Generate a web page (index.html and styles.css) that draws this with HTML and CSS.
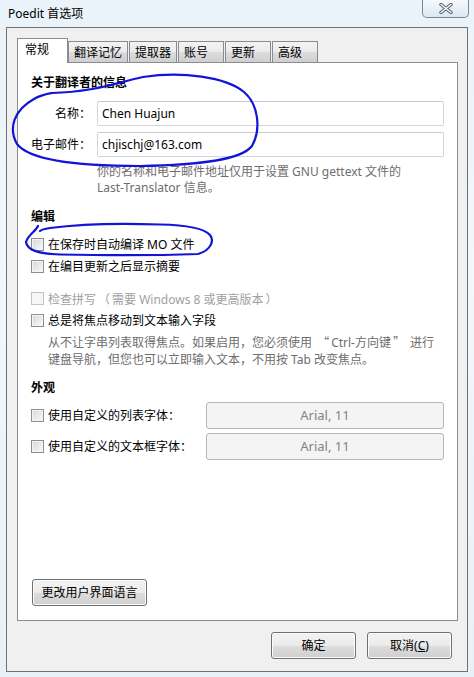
FILE: index.html
```html
<!DOCTYPE html>
<html lang="zh-CN">
<head>
<meta charset="utf-8">
<title>Poedit 首选项</title>
<link rel="stylesheet" href="styles.css">
</head>
<body>
<div class="window">
  <div class="titlebar">
    <span class="title">Poedit 首选项</span>
    <div class="close">
      <svg width="16" height="11" viewBox="0 0 16 11"><path d="M3 1.5 L13 9.5 M13 1.5 L3 9.5" stroke="#4f5f70" stroke-width="3.4" stroke-linecap="round"/><path d="M3 1.5 L13 9.5 M13 1.5 L3 9.5" stroke="#f4f7fa" stroke-width="1.6" stroke-linecap="round"/></svg>
    </div>
  </div>
  <div class="client">
    <div class="notebook">
      <div class="tabs">
        <div class="tab active">常规</div>
        <div class="tab">翻译记忆</div>
        <div class="tab">提取器</div>
        <div class="tab">账号</div>
        <div class="tab">更新</div>
        <div class="tab">高级</div>
      </div>
      <div class="panel">
        <div class="heading h-first">关于翻译者的信息</div>
        <div class="form">
          <label class="flabel">名称：</label>
          <div class="input">Chen Huajun</div>
          <label class="flabel">电子邮件：</label>
          <div class="input">chjischj@163.com</div>
          <div class="help help-form">你的名称和电子邮件地址仅用于设置 GNU gettext 文件的<br>Last-Translator 信息。</div>
        </div>

        <div class="heading h-edit">编辑</div>
        <div class="check c1"><span class="box"></span><span>在保存时自动编译 MO 文件</span></div>
        <div class="check c2"><span class="box"></span><span>在编目更新之后显示摘要</span></div>
        <div class="check c3 disabled"><span class="box"></span><span>检查拼写<span class="punct">（</span>需要 Windows 8 或更高版本<span class="punct">）</span></span></div>
        <div class="check c4"><span class="box"></span><span>总是将焦点移动到文本输入字段</span></div>
        <div class="help help-check">从不让字串列表取得焦点。如果启用，您必须使用 <span class="punct">“</span>Ctrl-方向键<span class="punct">”</span> 进行<br>键盘导航，但您也可以立即输入文本，不用按 Tab 改变焦点。</div>

        <div class="heading h-look">外观</div>
        <div class="fonts">
          <div class="check"><span class="box"></span><span>使用自定义的列表字体：</span></div>
          <div class="fontbtn">Arial, 11</div>
          <div class="check"><span class="box"></span><span>使用自定义的文本框字体：</span></div>
          <div class="fontbtn">Arial, 11</div>
        </div>

        <div class="button langbtn">更改用户界面语言</div>
      </div>
    </div>
    <div class="actions">
      <div class="button dlgbtn">确定</div>
      <div class="button dlgbtn">取消(<u>C</u>)</div>
    </div>
  </div>
  <svg class="scribble" width="474" height="677" viewBox="0 0 474 677">
    <path d="M52,93 C92,92 112,84 143,77 C182,71 226,77 244,92 C259,105 261,130 252,146 C241,160 200,165 140,166 C80,166 30,161 17,144 C8,128 14,110 34,99 C41,95 47,94 52,93" fill="none" stroke="#1414d8" stroke-width="2.2" stroke-linecap="round"/>
    <path d="M38,226 C36,231 28,235 26,242 C27,250 40,254 60,254.5 C110,255.5 170,255 198,254 C212,250 214,240 210,235 C204,228 185,225 160,224.5 C120,223 80,224 50,228 C44,229 41,230 40,231" fill="none" stroke="#1414d8" stroke-width="2.2" stroke-linecap="round"/>
  </svg>
</div>
</body>
</html>
```

FILE: styles.css
```css
* { box-sizing: border-box; }
html, body {
  margin: 0;
  padding: 0;
}
body {
  width: 474px;
  height: 677px;
  overflow: hidden;
  font-family: "Noto Sans", "Noto Sans CJK SC", sans-serif;
  font-size: 12px;
  color: #000;
  text-spacing-trim: space-all;
}
.window {
  position: relative;
  width: 474px;
  height: 677px;
  background: linear-gradient(180deg, #eaf3f9 0%, #f2f7fb 40%, #e8f1f8 100%);
  display: flex;
  flex-direction: column;
}
.titlebar {
  height: 27px;
  display: flex;
  justify-content: space-between;
  align-items: flex-start;
}
.title {
  margin: 5px 0 0 8px;
  font-size: 12px;
  line-height: 17px;
  color: #000;
}
.close {
  width: 47px;
  height: 18px;
  margin-right: 5px;
  border: 1px solid #7a8896;
  border-top: none;
  border-radius: 0 0 5px 5px;
  background: linear-gradient(180deg, #f6f9fc 0%, #e9f0f6 50%, #dde7f0 100%);
  display: flex;
  align-items: center;
  justify-content: center;
}
.client {
  margin: 0 6px 0 6px;
  height: 645px;
  border: 1px solid #6f7274;
  background: #f0f0f0;
  padding: 10px 9px 12px 10px;
  display: flex;
  flex-direction: column;
}
.notebook {
  display: flex;
  flex-direction: column;
}
.tabs {
  height: 24px;
  display: flex;
  align-items: flex-end;
  position: relative;
  z-index: 2;
}
.tab {
  height: 21px;
  min-width: 46px;
  padding: 0 5px;
  border: 1px solid #898c95;
  border-bottom: none;
  margin-right: 1px;
  background: linear-gradient(180deg, #f3f3f3 0%, #ebebeb 50%, #dddddd 51%, #cfcfcf 100%);
  line-height: 21px;
  white-space: nowrap;
}
.tab.active {
  height: 25px;
  margin-bottom: -1px;
  width: 51px;
  padding: 0 0 0 7px;
  margin-right: 0;
  background: #fff;
  line-height: 21px;
}
.panel {
  height: 559px;
  border: 1px solid #898c95;
  background: #fff;
  padding: 11px 13px 14px 13px;
  display: flex;
  flex-direction: column;
  position: relative;
  z-index: 1;
}
.heading {
  font-weight: bold;
  line-height: 17px;
}
.form {
  margin-top: 10px;
  display: grid;
  grid-template-columns: 60px 1fr;
  column-gap: 6px;
  row-gap: 6px;
}
.flabel {
  text-align: right;
  align-self: center;
  line-height: 17px;
  white-space: nowrap;
}
.input {
  height: 25px;
  border: 1px solid #d4d6da;
  border-top-color: #c6c9ce;
  border-radius: 2px;
  padding: 0 4px;
  line-height: 23px;
  background: #fff;
}
.help {
  color: #6d6d6d;
}
.help-form {
  grid-column: 2;
  margin-top: 1px;
  line-height: 16px;
}
.punct {
  font-family: "Noto Sans CJK SC", sans-serif;
  display: inline-block;
  width: 12px;
  margin: 0 2px;
  text-align: center;
}
.h-edit { margin-top: 12px; }
.check {
  display: flex;
  align-items: center;
  height: 17px;
  line-height: 17px;
  white-space: nowrap;
}
.box {
  width: 13px;
  height: 13px;
  margin-right: 4px;
  flex: none;
  border: 1px solid #8e8f8f;
  background: linear-gradient(135deg, #d6d6d6 0%, #ececec 60%, #fbfbfb 100%);
  box-shadow: inset 0 0 0 1px #f4f4f4;
}
.c1 { margin-top: 11px; }
.c2 { margin-top: 5px; }
.c3 { margin-top: 15px; }
.c4 { margin-top: 5px; }
.disabled { color: #a0a0a0; }
.disabled .box {
  border-color: #c4c4c4;
  background: #f6f6f6;
  box-shadow: none;
}
.help-check {
  margin-top: 4px;
  padding-left: 17px;
  line-height: 17px;
}
.h-look { margin-top: 11px; }
.fonts {
  margin-top: 6px;
  display: grid;
  grid-template-columns: 175px 1fr;
  row-gap: 4px;
  align-items: center;
}
.fontbtn {
  height: 27px;
  border: 1px solid #b4b8bb;
  border-radius: 3px;
  background: #f4f4f4;
  color: #838383;
  text-align: center;
  font-size: 13px;
  line-height: 25px;
}
.button {
  height: 27px;
  border: 1px solid #707070;
  border-radius: 3px;
  background: linear-gradient(180deg, #f2f2f2 0%, #ebebeb 50%, #dddddd 51%, #cfcfcf 100%);
  box-shadow: inset 0 0 0 1px #fcfcfc;
  text-align: center;
  line-height: 25px;
  white-space: nowrap;
}
.langbtn {
  margin-top: auto;
  width: 115px;
  align-self: flex-start;
  margin-left: 1px;
}
.actions {
  margin-top: 11px;
  display: flex;
  justify-content: flex-end;
  gap: 11px;
  padding-right: 6px;
}
.dlgbtn {
  width: 85px;
}
.dlgbtn u { text-decoration: underline; }
.scribble {
  position: absolute;
  left: 0;
  top: 0;
  pointer-events: none;
  z-index: 5;
}
```
